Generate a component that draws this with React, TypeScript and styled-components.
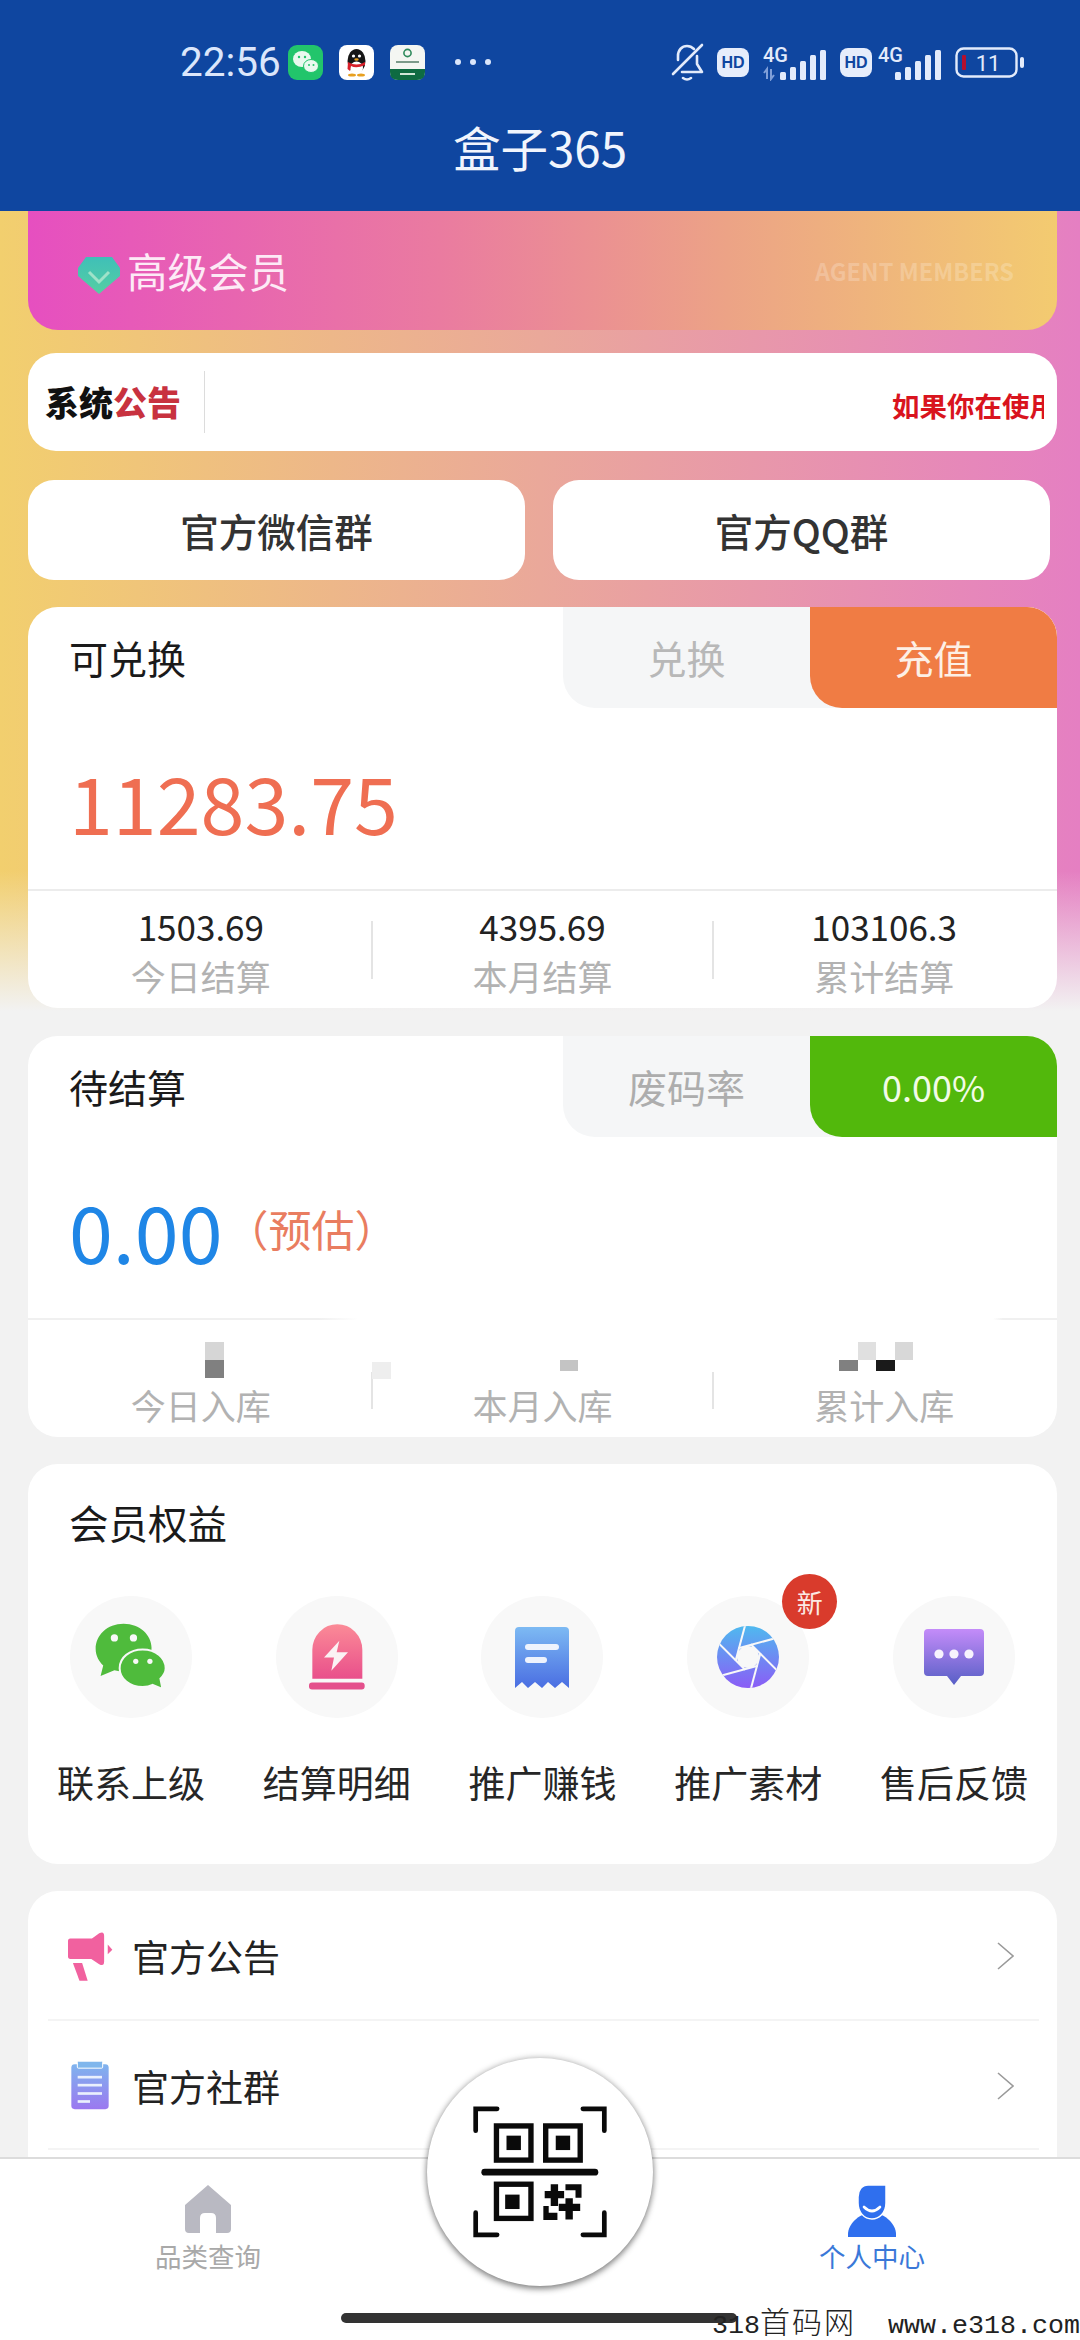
import React from 'react';
import styled, { createGlobalStyle } from 'styled-components';

const FONT = '"Noto Sans CJK SC", "Noto Sans", sans-serif';

const GlobalStyle = createGlobalStyle`
  html, body {
    margin: 0;
    padding: 0;
    background: #f2f2f2;
    font-family: ${FONT};
  }
  * { box-sizing: border-box; }
`;

const Screen = styled.div`
  position: relative;
  width: 1080px;
  height: 2340px;
  overflow: hidden;
  background: #f2f2f2;
`;

const Header = styled.header`
  height: 211px;
  background: #0f46a0;
  display: flex;
  flex-direction: column;
`;

const StatusBar = styled.div`
  height: 121px;
  padding: 43px 55px 0 180px;
  display: flex;
  justify-content: space-between;
  align-items: flex-start;
`;

const StatusGroup = styled.div`
  display: flex;
  align-items: center;
  height: 38px;
`;

const Clock = styled.span`
  font-family: Roboto, sans-serif;
  font-size: 40.5px;
  line-height: 38px;
  width: 108px;
  color: #dbe6fb;
`;

const AppIcon = styled.svg`
  width: 35px;
  height: 35px;
  margin-right: 16px;
  flex-shrink: 0;
`;

const Dots = styled.span`
  display: flex;
  gap: 9px;
  margin-left: 14px;
  i {
    width: 6px;
    height: 6px;
    border-radius: 50%;
    background: #dbe6fb;
  }
`;

const HdChip = styled.span<{ $gap: number }>`
  width: 32px;
  height: 29px;
  border-radius: 8px;
  background: #e6edfb;
  color: #0f46a0;
  font-family: "Liberation Sans", sans-serif;
  font-size: 16px;
  font-weight: 700;
  line-height: 29px;
  text-align: center;
  margin-right: ${(p) => p.$gap}px;
`;

const Title = styled.h1`
  margin: 0;
  text-align: center;
  color: #f1f5fd;
  font-size: 47.5px;
  font-weight: 400;
  line-height: 52px;
`;

const GradientZone = styled.div`
  padding: 0 23px 28px 28px;
  background:
    linear-gradient(to bottom, rgba(242, 242, 242, 0) 660px, #f2f2f2 800px),
    linear-gradient(90deg, #f2cf6e 0%, #eaa89a 50%, #e57fc2 100%);
`;

const MemberCard = styled.div`
  height: 119px;
  padding: 0 43px 0 49px;
  border-radius: 0 0 30px 30px;
  background: linear-gradient(90deg, #e64fc0 0%, #ea7ba0 40%, #eca386 68%, #f3cb70 100%);
  display: flex;
  align-items: center;
`;

const MemberGem = styled.svg`
  margin-top: 10px;
`;

const MemberName = styled.span`
  margin-left: 6px;
  font-size: 40.5px;
  line-height: 50px;
  color: #fdeaf6;
`;

const MemberTag = styled.span`
  margin-left: auto;
  font-size: 23.5px;
  font-weight: 700;
  color: rgba(255, 255, 255, 0.22);
  white-space: nowrap;
`;

const Notice = styled.div`
  height: 98px;
  margin-top: 23px;
  padding-left: 17px;
  background: #fff;
  border-radius: 28px;
  display: flex;
  align-items: center;
`;

const NoticeLogo = styled.span`
  width: 159px;
  font-size: 34px;
  font-weight: 900;
  line-height: 40px;
  color: #111;
  b {
    font-weight: 900;
    color: #c8323f;
  }
`;

const NoticeRule = styled.span`
  width: 1px;
  height: 62px;
  background: #dcdcdc;
`;

const NoticeTrack = styled.div`
  flex: 1;
  margin: 6px 13px 0 687px;
  overflow: hidden;
  white-space: nowrap;
  font-size: 27.5px;
  font-weight: 700;
  line-height: 36px;
  color: #d9141e;
`;

const GroupRow = styled.div`
  margin-top: 29px;
  padding-right: 7px;
  display: grid;
  grid-template-columns: 1fr 1fr;
  gap: 28px;
`;

const GroupButton = styled.div`
  height: 100px;
  background: #fff;
  border-radius: 26px;
  font-size: 38.5px;
  font-weight: 500;
  line-height: 100px;
  text-align: center;
  color: #333;
`;

const Card = styled.section<{ $top?: number }>`
  margin-top: ${(p) => p.$top ?? 0}px;
  background: #fff;
  border-radius: 30px;
  overflow: hidden;
`;

const PageCard = styled(Card)`
  margin-left: 28px;
  margin-right: 23px;
`;

const BalanceHead = styled.div`
  height: 101px;
  display: flex;
  align-items: stretch;
`;

const BalanceTitle = styled.div`
  flex: 1;
  padding-left: 41px;
  font-size: 39px;
  line-height: 100px;
  color: #1a1a1a;
`;

const Tab = styled.div<{ $bg: string; $color: string; $size?: number }>`
  width: 247px;
  border-radius: 0 0 0 32px;
  background: ${(p) => p.$bg};
  color: ${(p) => p.$color};
  font-size: ${(p) => p.$size ?? 39}px;
  line-height: 100px;
  text-align: center;
`;

const TabPair = styled.div`
  display: flex;
  background: #f5f6f7;
  border-radius: 0 0 0 32px;
`;

const AmountRow = styled.div`
  height: 181px;
  padding: 5px 0 0 41px;
  display: flex;
  align-items: center;
`;

const Amount = styled.span<{ $color: string }>`
  font-size: 79px;
  line-height: 90px;
  color: ${(p) => p.$color};
`;

const Estimate = styled.span`
  margin: -4px 0 0 3px;
  font-size: 43px;
  line-height: 50px;
  color: #e97d60;
`;

const StatsRule = styled.div<{ $broken?: boolean }>`
  height: 2px;
  background: ${(p) =>
    p.$broken
      ? 'linear-gradient(90deg, #f0f0f0 0 290px, #fff 330px 965px, #f0f0f0 975px)'
      : '#ececec'};
`;

const Stats = styled.div`
  height: 117px;
  padding: 0 3px;
  display: flex;
`;

const Stat = styled.div`
  flex: 1;
  padding-top: 13px;
  display: flex;
  flex-direction: column;
  align-items: center;
`;

const StatValue = styled.div`
  height: 44px;
  font-size: 35px;
  line-height: 44px;
  color: #222;
  display: flex;
  justify-content: center;
  width: 100%;
`;

const StatLabel = styled.div`
  margin-top: 4px;
  font-size: 35px;
  line-height: 48px;
  color: #b2b2b2;
`;

const StatSep = styled.div<{ $top: number; $height: number }>`
  position: relative;
  width: 2px;
  height: ${(p) => p.$height}px;
  margin-top: ${(p) => p.$top}px;
  background: #e4e4e4;
`;

const SepSmudge = styled.span`
  position: absolute;
  left: 1px;
  top: -10px;
  width: 19px;
  height: 17px;
  background: #eeeeee;
`;

const Mosaic = styled.div<{ $shift: number }>`
  margin: 9px 0 0 ${(p) => p.$shift}px;
  display: grid;
  grid-auto-columns: 18.5px;
  grid-template-rows: 18px 18px;
`;

const MosaicCell = styled.span<{ $col: number; $row: number; $color: string; $short?: boolean }>`
  grid-column: ${(p) => p.$col};
  grid-row: ${(p) => p.$row};
  height: ${(p) => (p.$short ? 11 : 18)}px;
  background: ${(p) => p.$color};
`;

const PerksCard = styled(PageCard)`
  padding: 36px 0 57px;
`;

const PerksTitle = styled.h2`
  margin: 0 0 52px;
  padding-left: 41px;
  font-size: 39.5px;
  font-weight: 400;
  line-height: 44px;
  color: #1a1a1a;
`;

const PerkGrid = styled.div`
  display: grid;
  grid-template-columns: repeat(5, 1fr);
`;

const Perk = styled.div`
  display: flex;
  flex-direction: column;
  align-items: center;
`;

const PerkCircle = styled.div`
  position: relative;
  width: 122px;
  height: 122px;
  border-radius: 50%;
  background: #f8f8f8;
  display: flex;
  align-items: center;
  justify-content: center;
`;

const NewBadge = styled.span`
  position: absolute;
  left: 95px;
  top: -22px;
  width: 55px;
  height: 55px;
  border-radius: 50%;
  background: #d93b2c;
  color: #fbe9e4;
  font-size: 26px;
  line-height: 55px;
  text-align: center;
`;

const PerkLabel = styled.div`
  margin-top: 39px;
  font-size: 37px;
  line-height: 50px;
  color: #262626;
  white-space: nowrap;
`;

const ListCard = styled(PageCard)`
  padding: 0 18px 0 20px;
  height: 420px;
`;

const ListRow = styled.div`
  height: 129.5px;
  padding-top: 3px;
  display: flex;
  align-items: center;
  border-bottom: 2px solid #f4f4f4;
`;

const ListIcon = styled.span`
  width: 84px;
  display: flex;
  justify-content: center;
`;

const ListLabel = styled.span`
  flex: 1;
  font-size: 37px;
  line-height: 48px;
  color: #222;
`;

const Chevron = styled.svg`
  margin-right: 25px;
`;

const TabBar = styled.nav`
  position: absolute;
  left: 0;
  right: 0;
  bottom: 0;
  height: 183px;
  background: #fff;
  border-top: 2px solid #dcdcdc;
  display: flex;
  flex-direction: column;
`;

const TabItems = styled.div`
  padding: 26px 108px 0;
  display: flex;
  justify-content: space-between;
`;

const TabItem = styled.div`
  width: 200px;
  height: 86px;
  display: flex;
  flex-direction: column;
  align-items: center;
  justify-content: space-between;
`;

const TabLabel = styled.span<{ $active?: boolean }>`
  font-size: 26.5px;
  line-height: 34px;
  color: ${(p) => (p.$active ? '#3a78d8' : '#a9a9a9')};
  margin-bottom: -2px;
`;

const ScanButton = styled.div`
  position: absolute;
  left: 427px;
  top: -101px;
  width: 226px;
  height: 228px;
  border-radius: 50%;
  background: #fff;
  box-shadow: 0 3px 6px rgba(0, 0, 0, 0.45), 0 -1px 6px rgba(0, 0, 0, 0.18);
  display: flex;
  align-items: center;
  justify-content: center;
`;

const HomeBar = styled.div`
  width: 396px;
  height: 10px;
  margin: 42px 0 0 341px;
  border-radius: 5px;
  background: #333;
`;

const Watermark = styled.div`
  position: absolute;
  right: 0;
  bottom: 0;
  height: 30px;
  font-family: "Liberation Mono", "Noto Sans CJK SC", monospace;
  font-size: 26.67px;
  line-height: 30px;
  color: #222;
  white-space: pre;
  span {
    font-size: 30px;
    font-weight: 300;
    letter-spacing: 2px;
  }
`;

const WeChatApp = () => (
  <AppIcon viewBox="0 0 35 35">
    <rect width="35" height="35" rx="9" fill="#22c56b" />
    <ellipse cx="14" cy="14" rx="9" ry="8" fill="#e9f9ef" />
    <ellipse cx="23" cy="21" rx="7.5" ry="6.5" fill="#e9f9ef" stroke="#22c56b" />
    <circle cx="11" cy="12" r="1.2" fill="#22c56b" />
    <circle cx="17" cy="12" r="1.2" fill="#22c56b" />
    <circle cx="21" cy="20" r="1" fill="#22c56b" />
    <circle cx="25.5" cy="20" r="1" fill="#22c56b" />
  </AppIcon>
);

const QqApp = () => (
  <AppIcon viewBox="0 0 35 35">
    <rect width="35" height="35" rx="8" fill="#fff" />
    <ellipse cx="17.5" cy="16" rx="9" ry="12" fill="#161616" />
    <ellipse cx="17.5" cy="23" rx="6.5" ry="6.5" fill="#fff" />
    <circle cx="14.5" cy="11" r="1.6" fill="#fff" />
    <circle cx="20.5" cy="11" r="1.6" fill="#fff" />
    <path d="M9 17 Q17.5 22 26 17 V20 Q17.5 24 12 21 L11 26 L8.5 24Z" fill="#d8202a" />
    <ellipse cx="13" cy="30" rx="4" ry="1.6" fill="#e8a020" />
    <ellipse cx="22" cy="30" rx="4" ry="1.6" fill="#e8a020" />
    <ellipse cx="17.5" cy="14.5" rx="2.2" ry="1.2" fill="#e8a020" />
  </AppIcon>
);

const GovApp = () => (
  <AppIcon viewBox="0 0 35 35">
    <rect width="35" height="35" rx="8" fill="#f4f6f2" />
    <path d="M0 24 H35 V27 Q35 35 27 35 H8 Q0 35 0 27Z" fill="#0e6b42" />
    <circle cx="17.5" cy="8" r="3.6" fill="none" stroke="#2f8a5c" strokeWidth="1.6" />
    <rect x="6" y="16" width="23" height="2" fill="#7c9a8a" />
    <rect x="10" y="28" width="15" height="2" fill="#cfe6d8" />
  </AppIcon>
);

const BellSvg = styled.svg`
  margin-right: 13px;
`;

const MutedBell = () => (
  <BellSvg width="34" height="39" viewBox="0 0 34 39" fill="none" stroke="#e3ebfb" strokeWidth="2.6" strokeLinecap="round" strokeLinejoin="round">
    <path d="M8 17 V13 C8 7 12 3 17 3 C20 3 22 4 24 6" />
    <path d="M27 13 V21 L32 29 H12" />
    <path d="M32 2 L3 31" />
    <path d="M13 35 Q17 38 21 35" />
  </BellSvg>
);

const SignalSvg = styled.svg`
  margin-right: 14px;
`;

const SignalIcon = ({ arrows }: { arrows?: boolean }) => (
  <SignalSvg width="63" height="38" viewBox="0 -4 63 38">
    <text x="0" y="15" fontFamily="Roboto, sans-serif" fontSize="20" fontWeight="500" fill="#e3ebfb">4G</text>
    {arrows && <path d="M4 32 V22 L1 26 M8 22 V32 L11 28" stroke="#7e9ed8" strokeWidth="2" fill="none" />}
    {[8, 13, 19, 25, 30].map((h, i) => (
      <rect key={h} x={17 + i * 10} y={33 - h} width="6" height={h} rx="1.5" fill="#e3ebfb" />
    ))}
  </SignalSvg>
);

const BatteryIcon = () => (
  <svg width="70" height="31" viewBox="0 0 70 31">
    <rect x="1.5" y="1.5" width="60" height="28" rx="7" fill="none" stroke="#e3ebfb" strokeWidth="2.4" />
    <rect x="7" y="8" width="4" height="15" rx="1" fill="#b4102e" />
    <text x="33" y="24" textAnchor="middle" fontFamily="Roboto, sans-serif" fontSize="22" fill="#e3ebfb">11</text>
    <rect x="65" y="10" width="4" height="11" rx="2" fill="#e3ebfb" />
  </svg>
);

const DiamondIcon = () => (
  <MemberGem width="44" height="39" viewBox="0 0 44 39">
    <defs>
      <linearGradient id="gem" x1="0" y1="0" x2="0" y2="1">
        <stop offset="0" stopColor="#3fbfb8" />
        <stop offset="1" stopColor="#55cfa2" />
      </linearGradient>
    </defs>
    <path d="M9 1 H35 L43 12 V20 L22 38 L1 20 V12Z" fill="url(#gem)" />
    <path d="M12 16 L22 26 L32 16" fill="none" stroke="#9fe2c9" strokeWidth="3" />
  </MemberGem>
);

const WeChatGlyph = () => (
  <svg width="71" height="68" viewBox="133 103 216 206">
    <path d="M220 105 C170 105 135 140 135 182 C135 204 146 220 158 232 L150 264 L192 246 C202 248 212 250 222 250 C272 250 305 218 305 178 C305 140 270 105 220 105Z" fill="#4fbb3c" />
    <circle cx="192" cy="148" r="11" fill="#f8f8f8" />
    <circle cx="250" cy="148" r="11" fill="#f8f8f8" />
    <path d="M278 183 C238 183 208 208 208 240 C208 272 238 297 278 297 C290 297 300 295 308 291 L338 303 L332 272 C342 262 348 252 348 240 C348 208 318 183 278 183Z" fill="#4fbb3c" stroke="#f8f8f8" strokeWidth="6" />
    <circle cx="257" cy="219" r="8" fill="#f8f8f8" />
    <circle cx="300" cy="219" r="8" fill="#f8f8f8" />
  </svg>
);

const AlarmGlyph = () => (
  <svg width="56" height="66" viewBox="775 108 168 197">
    <defs>
      <linearGradient id="alarm" x1="0" y1="0" x2="0" y2="1">
        <stop offset="0" stopColor="#fb8b97" />
        <stop offset="1" stopColor="#e94f8b" />
      </linearGradient>
    </defs>
    <path d="M785 272 V185 A75 77 0 0 1 935 185 V272Z" fill="url(#alarm)" />
    <rect x="775" y="283" width="167" height="21" rx="9" fill="#e4508c" />
    <path d="M866 158 L820 208 H850 L842 248 L892 192 H858Z" fill="#fbf2f4" />
  </svg>
);

const ReceiptGlyph = () => (
  <svg width="54" height="61" viewBox="0 0 54 61">
    <defs>
      <linearGradient id="receipt" x1="0" y1="0" x2="0" y2="1">
        <stop offset="0" stopColor="#7dbaf3" />
        <stop offset="1" stopColor="#4a6ee2" />
      </linearGradient>
    </defs>
    <path d="M4 0 H50 Q54 0 54 4 V61 L47 55 L40 61 L33 55 L27 61 L20 55 L13 61 L7 55 L0 61 V4 Q0 0 4 0Z" fill="url(#receipt)" />
    <rect x="10" y="17" width="34" height="6" rx="3" fill="#eef3fd" />
    <rect x="10" y="30" width="22" height="6" rx="3" fill="#eef3fd" />
  </svg>
);

const ApertureGlyph = () => {
  const c = 32;
  const inner = 11;
  const lines = [0, 60, 120, 180, 240, 300].map((deg) => {
    const t = ((deg + 15) * Math.PI) / 180;
    const px = c + inner * Math.cos(t);
    const py = c + inner * Math.sin(t);
    const dx = -Math.sin(t);
    const dy = Math.cos(t);
    return { key: deg, x1: px - dx * 7, y1: py - dy * 7, x2: px + dx * 34, y2: py + dy * 34 };
  });
  return (
    <svg width="64" height="64" viewBox="0 0 64 64">
      <defs>
        <linearGradient id="aperture" x1="0" y1="0" x2="0" y2="1">
          <stop offset="0" stopColor="#4fb9ef" />
          <stop offset="1" stopColor="#8b5cf6" />
        </linearGradient>
        <clipPath id="lens">
          <circle cx="32" cy="32" r="31" />
        </clipPath>
      </defs>
      <circle cx="32" cy="32" r="31" fill="url(#aperture)" />
      <g clipPath="url(#lens)">
        {lines.map(({ key, ...l }) => (
          <line key={key} {...l} stroke="#f8f8f8" strokeWidth="2" />
        ))}
      </g>
      <circle cx="32" cy="32" r="11" fill="#f8f8f8" />
    </svg>
  );
};

const ChatGlyph = () => (
  <svg width="60" height="56" viewBox="0 0 60 56">
    <defs>
      <linearGradient id="chat" x1="0" y1="0" x2="0" y2="1">
        <stop offset="0" stopColor="#c48cf9" />
        <stop offset="1" stopColor="#585fc6" />
      </linearGradient>
    </defs>
    <path d="M4 0 H56 Q60 0 60 4 V43 Q60 47 56 47 H37 L30 56 L23 47 H4 Q0 47 0 43 V4 Q0 0 4 0Z" fill="url(#chat)" />
    <circle cx="15" cy="25" r="4.6" fill="#f7f3fd" />
    <circle cx="30" cy="25" r="4.6" fill="#f7f3fd" />
    <circle cx="45" cy="25" r="4.6" fill="#f7f3fd" />
  </svg>
);

const MegaphoneGlyph = () => (
  <svg width="46" height="51" viewBox="52 36 140 153">
    <path d="M62 58 H128 L150 42 Q165 34 165 50 V128 Q165 144 150 136 L126 120 H62 Q55 120 55 112 V66 Q55 58 62 58Z" fill="#f1619f" />
    <path d="M176 76 L190 92 L176 106Z" fill="#f1619f" />
    <path d="M70 132 H98 L115 186 L90 186Z" fill="#f1619f" />
  </svg>
);

const ClipboardGlyph = () => (
  <svg width="38" height="49" viewBox="65 431 114 146">
    <defs>
      <linearGradient id="clip" x1="0" y1="0" x2="0" y2="1">
        <stop offset="0" stopColor="#7fb4ee" />
        <stop offset="1" stopColor="#9b78f0" />
      </linearGradient>
    </defs>
    <rect x="66" y="440" width="112" height="135" rx="10" fill="url(#clip)" />
    <rect x="84" y="431" width="76" height="21" rx="3" fill="#7fb6ec" stroke="#fff" strokeWidth="3" />
    <rect x="85" y="475" width="73" height="8" fill="#eaf0fd" />
    <rect x="85" y="499" width="73" height="8" fill="#eaf0fd" />
    <rect x="85" y="524" width="73" height="8" fill="#eaf0fd" />
    <rect x="85" y="548" width="37" height="8" fill="#eaf0fd" />
  </svg>
);

const HomeGlyph = () => (
  <svg width="46" height="48" viewBox="0 0 46 48">
    <path d="M23 0 L46 20 V44 Q46 48 42 48 H31 V33 Q31 28 26 28 H20 Q15 28 15 33 V48 H4 Q0 48 0 44 V20Z" fill="#b9b9c2" />
  </svg>
);

const PersonGlyph = () => (
  <svg width="48" height="52" viewBox="0 0 48 52">
    <path d="M24 28 C10 28 0 40 0 49 V52 H48 V49 C48 40 38 28 24 28Z" fill="#2f6fee" />
    <path d="M20 0 H38 V18 C38 28 31 34 24 34 C16 34 10 27 10 18 V12 C10 5 14 0 20 0Z" fill="#2f6fee" stroke="#fff" strokeWidth="1.5" />
    <path d="M16 22 Q24 30 32 22" fill="none" stroke="#fff" strokeWidth="2.6" strokeLinecap="round" />
  </svg>
);

const ScanGlyph = () => (
  <svg width="134" height="132" viewBox="160 172 400 393">
    <g fill="none" stroke="#0a0a0a" strokeWidth="14" strokeLinecap="round">
      <path d="M168 245 V180 H232" />
      <path d="M488 180 H552 V245" />
      <path d="M168 490 V556 H232" />
      <path d="M488 556 H552 V490" />
      <path d="M195 369 H524" strokeWidth="20" />
    </g>
    <g fill="none" stroke="#0a0a0a" strokeWidth="16">
      <rect x="230" y="231" width="103" height="102" />
      <rect x="377" y="231" width="103" height="102" />
      <rect x="230" y="405" width="103" height="102" />
    </g>
    <g fill="#0a0a0a">
      <rect x="260" y="260" width="43" height="43" />
      <rect x="407" y="260" width="43" height="43" />
      <rect x="256" y="436" width="43" height="43" />
      <path d="M392 405 H414 V425 H432 V447 H414 V470 H392 V447 H374 V425 H392Z" />
      <path d="M436 405 H484 V445 H466 V423 H436Z" />
      <path d="M436 447 H458 V463 H480 V485 H458 V510 H436 V485 H416 V463 H436Z" />
      <path d="M370 470 H386 V490 H412 V512 H370Z" />
    </g>
  </svg>
);

const ListChevron = () => (
  <Chevron width="17" height="28" viewBox="0 0 17 28" fill="none" stroke="#9a9a9a" strokeWidth="1.6">
    <path d="M1 1 L16 14 L1 27" />
  </Chevron>
);

const perks = [
  { label: '联系上级', icon: <WeChatGlyph /> },
  { label: '结算明细', icon: <AlarmGlyph /> },
  { label: '推广赚钱', icon: <ReceiptGlyph /> },
  { label: '推广素材', icon: <ApertureGlyph />, fresh: true },
  { label: '售后反馈', icon: <ChatGlyph /> },
];

export default function App() {
  return (
    <Screen>
      <GlobalStyle />
      <Header>
        <StatusBar>
          <StatusGroup>
            <Clock>22:56</Clock>
            <WeChatApp />
            <QqApp />
            <GovApp />
            <Dots>
              <i />
              <i />
              <i />
            </Dots>
          </StatusGroup>
          <StatusGroup>
            <MutedBell />
            <HdChip $gap={14}>HD</HdChip>
            <SignalIcon arrows />
            <HdChip $gap={6}>HD</HdChip>
            <SignalIcon />
            <BatteryIcon />
          </StatusGroup>
        </StatusBar>
        <Title>盒子365</Title>
      </Header>

      <GradientZone>
        <MemberCard>
          <DiamondIcon />
          <MemberName>高级会员</MemberName>
          <MemberTag>AGENT MEMBERS</MemberTag>
        </MemberCard>

        <Notice>
          <NoticeLogo>
            系统<b>公告</b>
          </NoticeLogo>
          <NoticeRule />
          <NoticeTrack>如果你在使用</NoticeTrack>
        </Notice>

        <GroupRow>
          <GroupButton>官方微信群</GroupButton>
          <GroupButton>官方QQ群</GroupButton>
        </GroupRow>

        <Card $top={27}>
          <BalanceHead>
            <BalanceTitle>可兑换</BalanceTitle>
            <TabPair>
              <Tab $bg="transparent" $color="#b8b8b8">兑换</Tab>
              <Tab $bg="#f07c44" $color="#fdf0e6">充值</Tab>
            </TabPair>
          </BalanceHead>
          <AmountRow>
            <Amount $color="#ef6e52">11283.75</Amount>
          </AmountRow>
          <StatsRule />
          <Stats>
            <Stat>
              <StatValue>1503.69</StatValue>
              <StatLabel>今日结算</StatLabel>
            </Stat>
            <StatSep $top={30} $height={58} />
            <Stat>
              <StatValue>4395.69</StatValue>
              <StatLabel>本月结算</StatLabel>
            </Stat>
            <StatSep $top={30} $height={58} />
            <Stat>
              <StatValue>103106.3</StatValue>
              <StatLabel>累计结算</StatLabel>
            </Stat>
          </Stats>
        </Card>
      </GradientZone>

      <PageCard>
        <BalanceHead>
          <BalanceTitle>待结算</BalanceTitle>
          <TabPair>
            <Tab $bg="transparent" $color="#adadad">废码率</Tab>
            <Tab $bg="#52b80c" $color="#f2fbe8" $size={36}>0.00%</Tab>
          </TabPair>
        </BalanceHead>
        <AmountRow>
          <Amount $color="#1f86e6">0.00</Amount>
          <Estimate>（预估）</Estimate>
        </AmountRow>
        <StatsRule $broken />
        <Stats>
          <Stat>
            <StatValue>
              <Mosaic $shift={27}>
                <MosaicCell $col={1} $row={1} $color="#d6d6d6" />
                <MosaicCell $col={1} $row={2} $color="#808080" />
              </Mosaic>
            </StatValue>
            <StatLabel>今日入库</StatLabel>
          </Stat>
          <StatSep $top={52} $height={37}>
            <SepSmudge />
          </StatSep>
          <Stat>
            <StatValue>
              <Mosaic $shift={53}>
                <MosaicCell $col={1} $row={2} $color="#c4c4c4" $short />
              </Mosaic>
            </StatValue>
            <StatLabel>本月入库</StatLabel>
          </Stat>
          <StatSep $top={52} $height={37} />
          <Stat>
            <StatValue>
              <Mosaic $shift={-16}>
                <MosaicCell $col={1} $row={2} $color="#808080" $short />
                <MosaicCell $col={2} $row={1} $color="#e0e0e0" />
                <MosaicCell $col={3} $row={2} $color="#1a1a1a" $short />
                <MosaicCell $col={4} $row={1} $color="#d8d8d8" />
              </Mosaic>
            </StatValue>
            <StatLabel>累计入库</StatLabel>
          </Stat>
        </Stats>
      </PageCard>

      <PerksCard $top={27}>
        <PerksTitle>会员权益</PerksTitle>
        <PerkGrid>
          {perks.map((perk) => (
            <Perk key={perk.label}>
              <PerkCircle>
                {perk.icon}
                {perk.fresh && <NewBadge>新</NewBadge>}
              </PerkCircle>
              <PerkLabel>{perk.label}</PerkLabel>
            </Perk>
          ))}
        </PerkGrid>
      </PerksCard>

      <ListCard $top={27}>
        <ListRow>
          <ListIcon>
            <MegaphoneGlyph />
          </ListIcon>
          <ListLabel>官方公告</ListLabel>
          <ListChevron />
        </ListRow>
        <ListRow>
          <ListIcon>
            <ClipboardGlyph />
          </ListIcon>
          <ListLabel>官方社群</ListLabel>
          <ListChevron />
        </ListRow>
      </ListCard>

      <TabBar>
        <ScanButton>
          <ScanGlyph />
        </ScanButton>
        <TabItems>
          <TabItem>
            <HomeGlyph />
            <TabLabel>品类查询</TabLabel>
          </TabItem>
          <TabItem>
            <PersonGlyph />
            <TabLabel $active>个人中心</TabLabel>
          </TabItem>
        </TabItems>
        <HomeBar />
      </TabBar>

      <Watermark>
        318<span>首码网</span>  www.e318.com
      </Watermark>
    </Screen>
  );
}
